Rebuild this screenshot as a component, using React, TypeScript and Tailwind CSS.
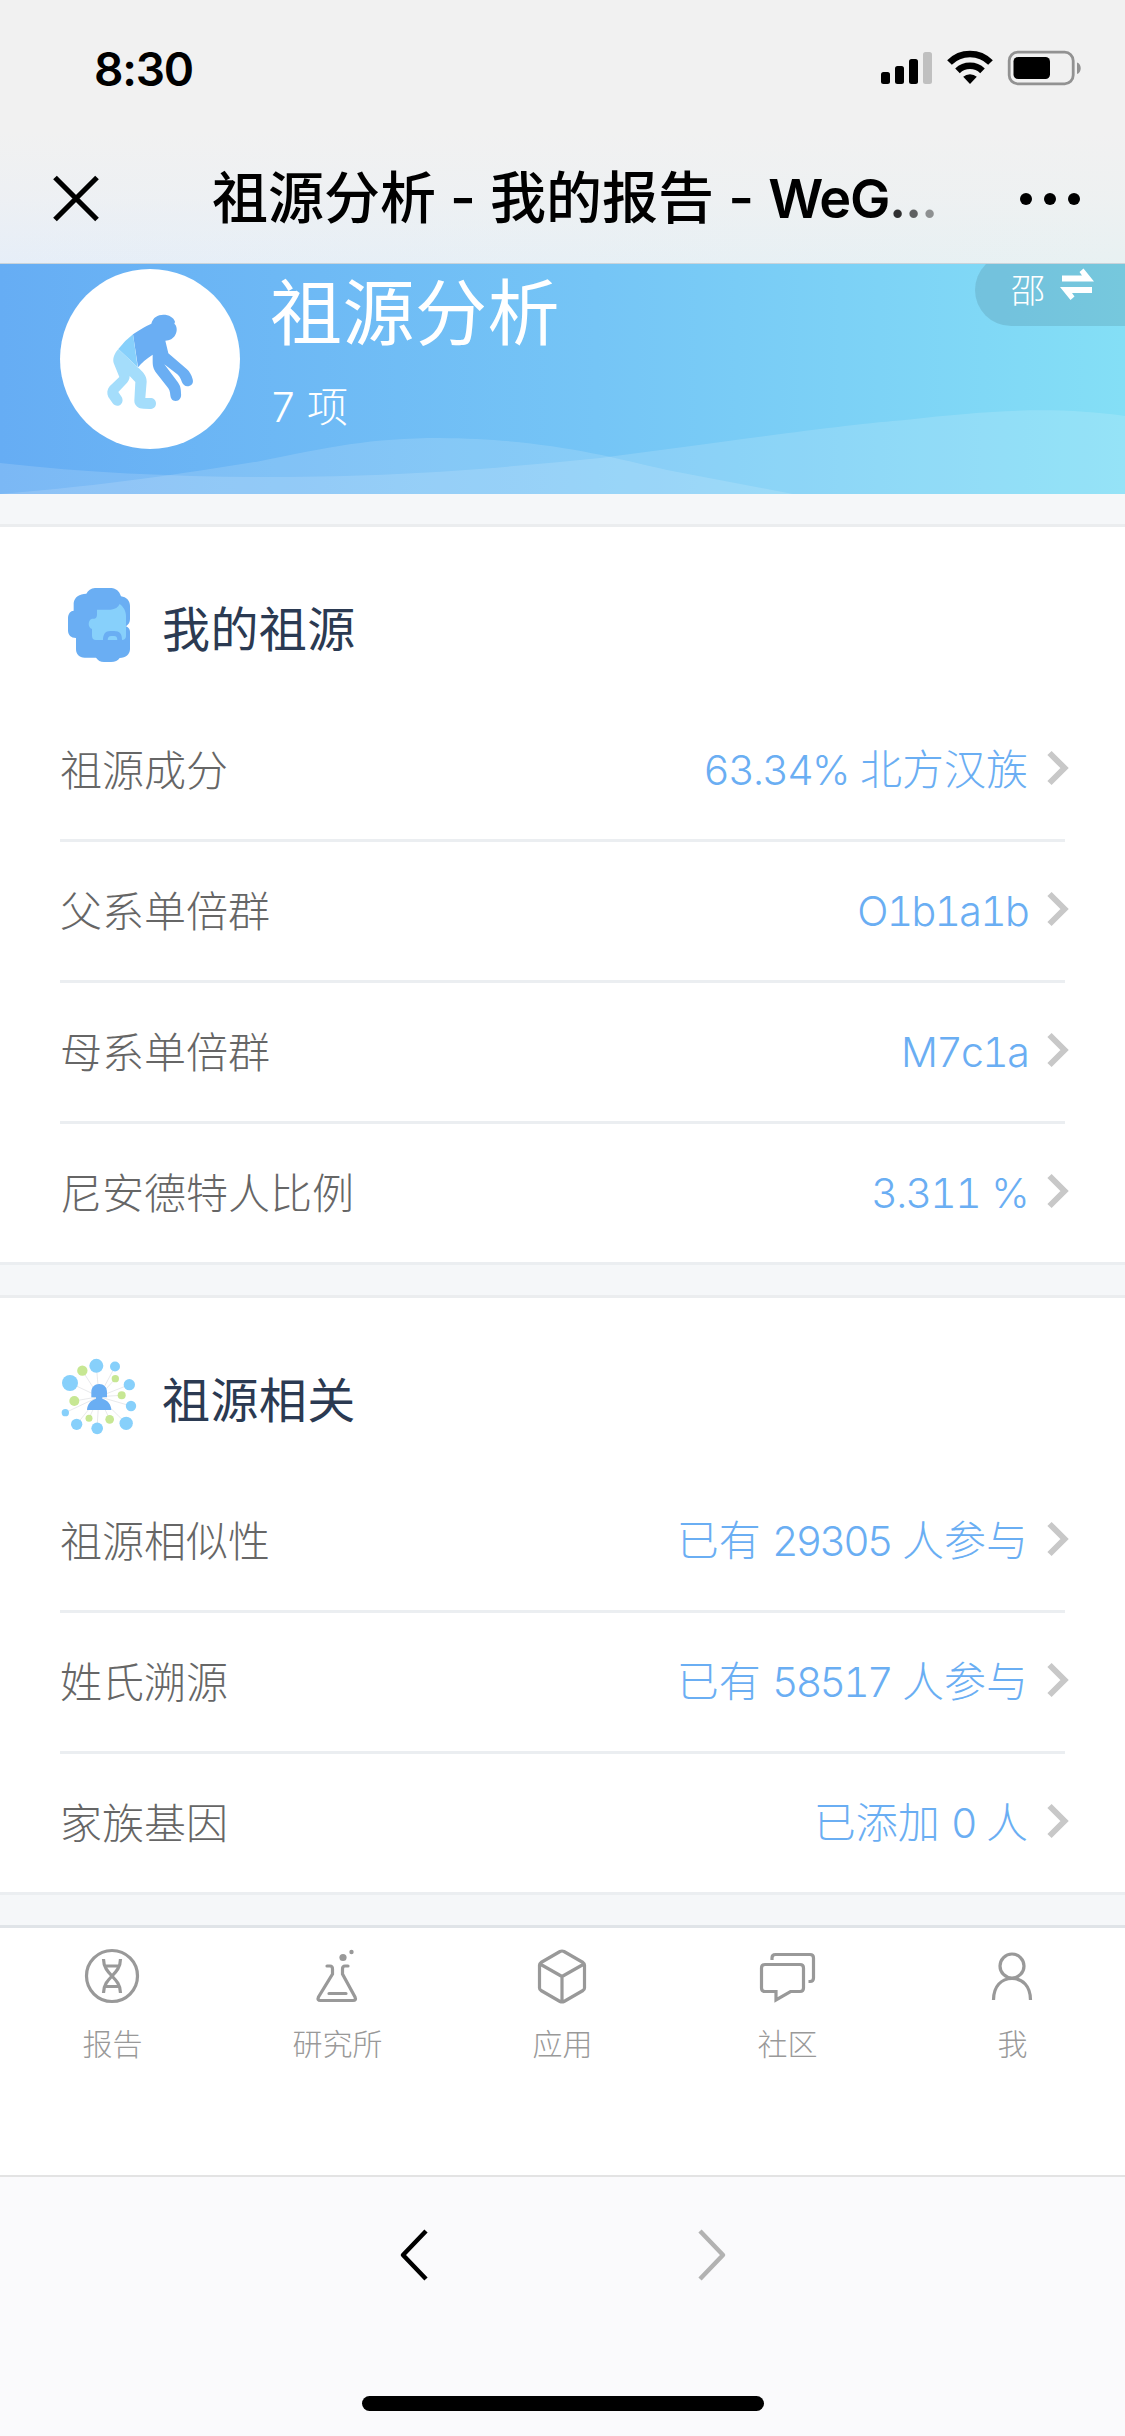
import React from "react";

type Row = {
    label: string;
    value: React.ReactNode;
};

const Num = ({ children }: { children: React.ReactNode }) => (
    <span className="font-['Inter'] text-[41px] tracking-[-1.7px] tabular-nums">{children}</span>
);

const Count = ({ children }: { children: React.ReactNode }) => (
    <span className="font-['Inter'] text-[41px] tracking-[-2.8px] tabular-nums">{children}</span>
);

const ancestryRows: Row[] = [
    { label: "祖源成分", value: <><Num>63.34%</Num> 北方汉族</> },
    { label: "父系单倍群", value: <Num>O1b1a1b</Num> },
    { label: "母系单倍群", value: <Num>M7c1a</Num> },
    { label: "尼安德特人比例", value: <Num>3.311 %</Num> },
];

const relatedRows: Row[] = [
    { label: "祖源相似性", value: <>已有 <Count>29305</Count> 人参与</> },
    { label: "姓氏溯源", value: <>已有 <Count>58517</Count> 人参与</> },
    { label: "家族基因", value: <>已添加 <Count>0</Count> 人</> },
];

const StatusIcons = () => (
    <svg className="w-[204px] h-[40px]" viewBox="879 50 204 40" fill="none">
        <rect x="881" y="73" width="9" height="12" rx="2.5" fill="#000" />
        <rect x="895" y="67" width="9" height="18" rx="2.5" fill="#000" />
        <rect x="909" y="60" width="9" height="25" rx="2.5" fill="#000" />
        <rect x="923" y="53" width="9" height="32" rx="2.5" fill="#c0c0c0" />
        <g stroke="#000" strokeWidth="6.6">
            <path d="M949.5 63.5a29 29 0 0 1 41 0" />
            <path d="M957.5 71.8a18 18 0 0 1 25 0" />
        </g>
        <path d="M970 85l-6.8-7.2a10 10 0 0 1 13.6 0z" fill="#000" />
        <rect x="1009.2" y="53.2" width="64" height="31.6" rx="8.5" stroke="#929292" strokeWidth="2.8" />
        <rect x="1013.5" y="58" width="36.5" height="22" rx="4.5" fill="#000" />
        <path d="M1077 63.5c5 1.5 5 10 0 11.5z" fill="#929292" />
    </svg>
);

const ApeIcon = () => (
    <svg className="w-[180px] h-[180px]" viewBox="-105 -93 540 540">
        <path
            d="M114 103Q144 82 169 71C174 52 188 44 205 44C222 44 236 52 240 65Q239 69 238 71C247 78 247 94 241 104C235 116 224 121 211 122L220 160L275 207C284 215 289 224 293 238C297 252 287 259 277 259C269 259 264 254 261 247C257 233 251 226 243 220L208 193L248 246C255 256 258 263 258 280C260 294 253 303 242 303C231 303 227 295 226 286C225 275 223 267 217 261L184 219C175 207 173 198 173 184L173 164C155 176 140 187 129 202Z"
            fill="#6aaef3"
        />
        <path d="M70 147Q89 122 114 103L128 202Z" fill="#87d0fb" />
        <path
            d="M70 147L128 202C143 215 155 226 155 245L151 294H165C176 294 183 300 183 311C182 322 175 327 164 327L146 326C130 326 118 316 118 302L121 246L104 228C104 238 99 246 92 253L70 276L80 291C84 297 84 307 78 313C69 321 58 317 53 310L40 291C35 280 36 269 44 259L73 231L56 189C52 173 60 159 70 147Z"
            fill="#a4ddfb"
        />
    </svg>
);

const FaceIcon = () => (
    <svg className="w-[78px] h-[78px]" viewBox="60 84 234 234">
        <path
            d="M165 87H214C228 88 238 96 243 112C259 114 270 125 270 141V180C270 190 266 196 258 202C266 205 270 211 270 218V271C269 287 258 296 239 297C234 305 225 309 213 309H192C181 309 174 304 168 296H134C118 296 108 286 108 270V237C93 237 84 229 84 214V178C84 164 92 155 101 155V132C103 114 118 105 139 104C144 94 153 88 165 87Z"
            fill="#6aaef3"
        />
        <path
            d="M171 152H212C226 151 234 145 239 135C250 143 258 156 258 171V232C258 239 253 243 246 243C246 225 240 216 222 216H211C196 216 189 226 189 243H168C160 243 156 238 156 230V210C143 206 143 183 156 179H163C169 178 171 174 171 166Z"
            fill="#87d0fb"
        />
        <path d="M203 243C203 235 207 231 214 231H222C229 231 232 236 232 243Z" fill="#87d0fb" />
    </svg>
);

const RelationIcon = () => (
    <svg className="w-[78px] h-[78px]" viewBox="60 84 234 234">
        <path
            d="M177 200L127 122M177 200L169 107M177 200L225 110M177 200L226 146M177 200L268 164M177 200L245 196M177 200L273 228M177 200L258 280M177 200L209 268M171 295L177 200M147 265L177 200M110 283L177 200M76 248L177 200M103 213L177 200M90 159L177 200"
            stroke="#e3e5e7"
            strokeWidth="2.5"
        />
        <g fill="#87d0fb">
            <circle cx="169" cy="107.5" r="21" />
            <circle cx="225" cy="109.5" r="15" />
            <circle cx="90" cy="159" r="24" />
            <circle cx="268" cy="164" r="17" />
            <circle cx="273" cy="228" r="15.5" />
            <circle cx="76" cy="248" r="11" />
            <circle cx="110" cy="283" r="17" />
            <circle cx="171.5" cy="295" r="17.5" />
            <circle cx="258.5" cy="280" r="20" />
        </g>
        <g fill="#c7e793">
            <circle cx="127" cy="122" r="15.5" />
            <circle cx="226" cy="146" r="11" />
            <circle cx="245" cy="196" r="12" />
            <circle cx="103" cy="213" r="15" />
            <circle cx="147" cy="265" r="10.5" />
            <circle cx="209" cy="268" r="13" />
        </g>
        <path
            d="M154 202V186C154 171 164 162 177.5 162C191 162 201 171 201 186V202H187V206C204 211 213 223 214 240H141C142 223 151 211 168 206V202Z"
            fill="#6aaef3"
        />
    </svg>
);

const Chevron = () => (
    <svg className="w-[22px] h-[36px] mb-[2px]" viewBox="0 0 22 36" fill="none" stroke="#c8c8c8" strokeWidth="6">
        <path d="M2.5 3L17.5 18L2.5 33" />
    </svg>
);

const Section = ({ icon, title, rows }: { icon: React.ReactNode; title: string; rows: Row[] }) => (
    <section className="bg-white border-b-[3px] border-[#ebeef1]">
        <div className="h-[174px] px-[60px] pt-[24px] flex items-center">
            {icon}
            <h2 className="ml-[24px] text-[48px] leading-none tracking-[0.4px] text-[#2b3a52]">{title}</h2>
        </div>
        <ul className="px-[60px]">
            {rows.map((row, i) => (
                <li
                    key={row.label}
                    className={
                        i === rows.length - 1
                            ? "h-[138px] pb-[3px] flex items-center justify-between"
                            : "h-[141px] pb-[3px] flex items-center justify-between border-b-[3px] border-[#ebeef1]"
                    }
                >
                    <span className="mb-[2px] text-[42px] leading-none font-light text-[#666]">{row.label}</span>
                    <span className="flex items-center -mr-1">
                        <span className="text-[42px] leading-none font-light text-[#6aaef3] mr-[19px] [word-spacing:2px]">
                            {row.value}
                        </span>
                        <Chevron />
                    </span>
                </li>
            ))}
        </ul>
    </section>
);

const tabs = [
    {
        name: "报告",
        icon: (
            <>
                <circle cx="30" cy="28" r="25.5" />
                <path d="M21.5 11C21.5 27 38.5 29 38.5 45M38.5 11C38.5 27 21.5 29 21.5 45M23 18H37M23 38.5H37" />
            </>
        ),
    },
    {
        name: "研究所",
        icon: (
            <>
                <path
                    d="M20 18H23Q25.5 18 25.5 21V26L11.5 49Q10 52.5 13.5 52.5H46Q49.5 52.5 48 49L35.5 26V21Q35.5 18 38 18H41M22 45.5H39"
                    strokeLinecap="round"
                />
                <circle cx="36" cy="9.5" r="3.6" fill="#999" stroke="none" />
                <circle cx="44.5" cy="4" r="2.2" fill="#999" stroke="none" />
            </>
        ),
    },
    {
        name: "应用",
        icon: (
            <path
                d="M28 3.5Q30 2.5 32 3.5L51 14.5Q52.5 15.5 52.5 17V40Q52.5 41.5 51 42.5L32 53.5Q30 54.5 28 53.5L9 42.5Q7.5 41.5 7.5 40V17Q7.5 15.5 9 14.5ZM8 16L30 28.5L52 16M30 28.5V54"
                strokeLinejoin="round"
            />
        ),
    },
    {
        name: "社区",
        icon: (
            <>
                <path d="M8 16.5H43Q46.5 16.5 46.5 20V40Q46.5 43.5 43 43.5H33.5L19 52V43.5H8Q4.5 43.5 4.5 40V20Q4.5 16.5 8 16.5Z" />
                <path d="M15 12V10Q15 6.5 18.5 6.5H53Q56.5 6.5 56.5 10V30Q56.5 33.5 53 33.5H51.5" />
            </>
        ),
    },
    {
        name: "我",
        icon: (
            <>
                <circle cx="30" cy="18" r="12" />
                <path d="M11.5 52C11.5 38 19.5 30.5 30 30.5S48.5 38 48.5 52" />
            </>
        ),
    },
];

const App = () => {
    return (
        <div className="w-[1125px] h-[2436px] flex flex-col overflow-hidden bg-[#f5f7f9] font-['Noto_Sans_CJK_SC',sans-serif]">
            {/* Status bar and page title */}
            <header className="h-[264px] shrink-0 border-b border-[#c9d3da] bg-[linear-gradient(to_bottom,#f1f1f1_50%,#f1f1f1aa_75%,transparent),linear-gradient(to_right,#e6eef8,#e8f1f2)]">
                <div className="h-[138px] pl-[94px] pr-[42px] flex items-center justify-between">
                    <span className="font-['Inter'] font-semibold text-[46px] leading-none tracking-[-1.2px] text-black">8:30</span>
                    <StatusIcons />
                </div>
                <div className="h-[121px] pl-[50px] pr-[41px] flex items-center">
                    <svg className="w-[52px] h-[52px]" viewBox="0 0 52 52" stroke="#000" strokeWidth="5.2">
                        <path d="M5 4.5L47 46.5M47 4.5L5 46.5" />
                    </svg>
                    <h1 className="ml-[110px] pb-[4px] flex-1 whitespace-nowrap text-[56px] leading-[84px] font-medium text-black [word-spacing:1.5px]">
                        祖源分析 <span className="font-['Inter']">-</span> 我的报告 <span className="font-['Inter']">-</span>{" "}
                        <span className="font-['Inter'] font-semibold text-[54px] tracking-[-1.3px]">
                            WeG<span className="text-black/80">.</span><span className="text-black/60">.</span><span className="text-black/40">.</span>
                        </span>
                    </h1>
                    <svg className="w-[68px] h-[20px]" viewBox="0 0 68 20">
                        <circle cx="10" cy="10" r="6" />
                        <circle cx="34" cy="10" r="6" />
                        <circle cx="58" cy="10" r="6" />
                    </svg>
                </div>
            </header>

            {/* Banner */}
            <div className="relative h-[230px] shrink-0 overflow-hidden bg-[linear-gradient(to_right,#66adf4,#75c5f6_53%,#84dff6)]">
                <svg className="absolute inset-0 w-full h-full" viewBox="0 0 1125 230" fill="#fff" fillOpacity="0.14">
                    <path d="M0 230C110 221 180 210 257 197.7C330 183 370 174 440 174C540 175 600 190 667 206L793 230Z" />
                    <path d="M0 199C90 209 180 213 270 213C400 213 500 204 600 194C720 178 850 160 905 156C1000 145 1060 143 1125 152V230H0Z" />
                </svg>
                <div className="relative flex pl-[60px] pt-[5px]">
                    <div className="w-[180px] h-[180px] rounded-full bg-white">
                        <ApeIcon />
                    </div>
                    <div className="ml-[30px] text-white">
                        <div className="mt-[3px] text-[72px] leading-[72px] tracking-[0.5px]">祖源分析</div>
                        <div className="mt-[40px] text-[41px] leading-[41px] font-light [word-spacing:3px]">
                            <Num>7</Num> 项
                        </div>
                    </div>
                </div>
                <div className="absolute right-0 -top-[10px] w-[150px] h-[72px] pl-[36px] flex items-center rounded-l-full bg-black/10 text-white">
                    <span className="mb-[3px] text-[34px] leading-none font-light">邵</span>
                    <svg className="ml-[15px] mb-[10px] w-[34px] h-[34px]" viewBox="0 0 34 34" fill="#fff">
                        <path d="M2 7.5H22L19.5 4L23.5 0.5L34 13.5H2Z" />
                        <path d="M32 25H12L14.5 28.5L10.5 32L0 19H32Z" />
                    </svg>
                </div>
            </div>

            <div className="h-[33px] shrink-0 border-b-[3px] border-[#ebedef]" />
            <Section icon={<FaceIcon />} title="我的祖源" rows={ancestryRows} />
            <div className="h-[33px] shrink-0 border-b-[3px] border-[#ebedef]" />
            <Section icon={<RelationIcon />} title="祖源相关" rows={relatedRows} />

            {/* Tab bar */}
            <nav className="mt-[30px] h-[250px] shrink-0 bg-white border-t-[3px] border-[#e0e4e8] grid grid-cols-5">
                {tabs.map((tab) => (
                    <div key={tab.name} className="flex flex-col items-center pt-[20px]">
                        <svg className="w-[60px] h-[60px] mr-px" viewBox="0 0 60 60" fill="none" stroke="#999" strokeWidth="3.2">
                            {tab.icon}
                        </svg>
                        <span className="mt-[19px] text-[30px] leading-none font-light text-[#999]">{tab.name}</span>
                    </div>
                ))}
            </nav>

            {/* Browser toolbar */}
            <footer className="flex-1 flex flex-col items-center border-t-2 border-[#e3e3e3] bg-[#fafafc]">
                <div className="mt-[50px] w-[328px] flex justify-between">
                    <svg className="w-[30px] h-[56px]" viewBox="0 0 30 56" fill="none" stroke="#000" strokeWidth="4.5">
                        <path d="M27 4L4 28L27 52" strokeLinejoin="round" />
                    </svg>
                    <svg className="w-[30px] h-[56px]" viewBox="0 0 30 56" fill="none" stroke="#b2b2b2" strokeWidth="4.5">
                        <path d="M3 4L26 28L3 52" strokeLinejoin="round" />
                    </svg>
                </div>
                <div className="mt-[113px] w-[402px] h-[15px] rounded-full bg-black" />
            </footer>
        </div>
    );
};

export default App;
